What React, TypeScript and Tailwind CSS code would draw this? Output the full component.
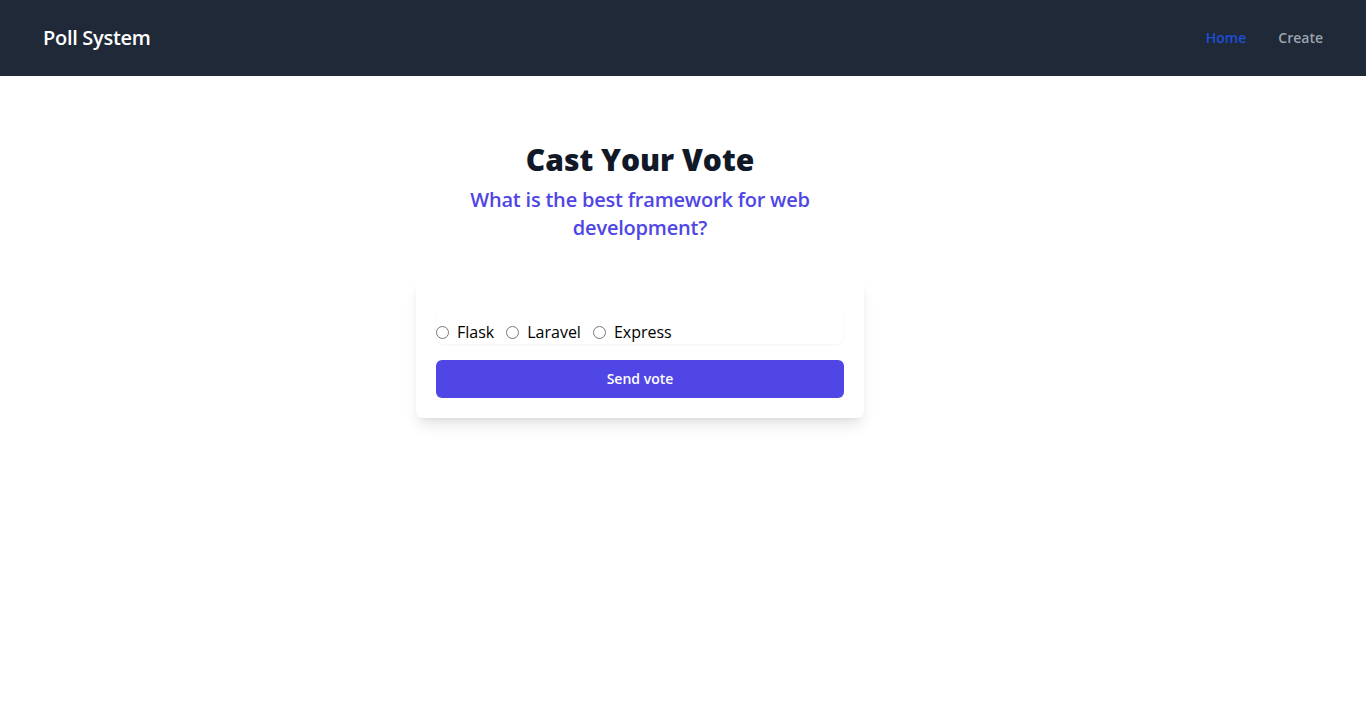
import { useState } from 'react';

const options = ['Flask', 'Laravel', 'Express'];

function Navbar() {
  return (
    <nav className="bg-[#1f2937]">
      <div className="mx-auto flex max-w-[1280px] items-center justify-between py-6">
        <span className="text-xl font-semibold leading-7 tracking-[-0.3px] text-white">Poll System</span>
        <div className="flex items-center gap-8 text-sm font-semibold">
          <a href="#" className="text-[#1d4ed8]">
            Home
          </a>
          <a href="#" className="text-[#9ca3af]">
            Create
          </a>
        </div>
      </div>
    </nav>
  );
}

export default function App() {
  const [choice, setChoice] = useState('');

  return (
    <div className="min-h-screen bg-white font-['Open_Sans','Noto_Sans',sans-serif]">
      <Navbar />
      <main className="flex max-w-[1280px] flex-col items-center pt-[66px]">
        <h1 className="text-3xl font-extrabold leading-9 text-[#111827]">Cast Your Vote</h1>
        <h2 className="mt-2 max-w-sm text-center text-xl font-semibold leading-7 tracking-[-0.2px] text-[#4f46e5]">
          What is the best framework for web development?
        </h2>

        <form
          className="mt-9 flex w-[448px] flex-col gap-4 rounded-md bg-white px-5 pt-[30px] pb-5 shadow-lg"
          onSubmit={(e) => e.preventDefault()}
        >
          <div className="flex h-9 items-end gap-3 rounded-lg shadow-[0_1px_3px_rgb(0_0_0_/_5%)]">
            {options.map((option) => (
              <label key={option} className="flex items-center gap-2 text-base leading-6 text-black">
                <input
                  type="radio"
                  name="vote"
                  value={option}
                  checked={choice === option}
                  onChange={() => setChoice(option)}
                  className="m-0 size-[13px]"
                />
                {option}
              </label>
            ))}
          </div>
          <button
            type="submit"
            className="h-[38px] w-full rounded-md bg-[#4f46e5] text-sm font-semibold text-white"
          >
            Send vote
          </button>
        </form>
      </main>
    </div>
  );
}
